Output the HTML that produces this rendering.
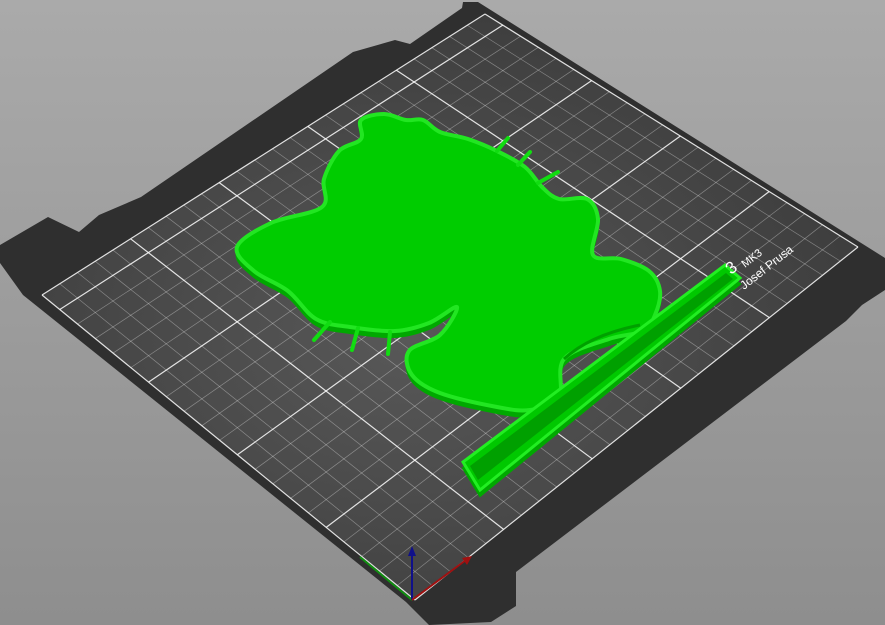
<!DOCTYPE html>
<html><head><meta charset="utf-8"><style>
html,body{margin:0;padding:0;width:885px;height:625px;overflow:hidden}
body{background:linear-gradient(#aaaaaa,#8e8e8e);}
svg{position:absolute;left:0;top:0}
</style></head><body>
<svg id="s" width="885" height="625" viewBox="0 0 885 625" xmlns="http://www.w3.org/2000/svg">
<defs>
<radialGradient id="g" cx="0.45" cy="0.55" r="0.6">
<stop offset="0" stop-color="#585858"/><stop offset="1" stop-color="#3c3c3c"/>
</radialGradient>
</defs>
<polygon fill="#2f2f2f" points="463,2 478,2 885,258 885,290 862,305 846,321 516,572 516,606 491,622 429,625 406,602 23,295 0,263 0,245 48,217 79,232 99,215 141,197 353,52 395,40 410,44 462,8"/>
<polygon fill="url(#g)" points="485,14 858,247 415,600 42,295"/>
<g id="grid"></g>
<g id="obj">
<g transform="translate(0,6)" fill="#00a800" stroke="#00a800" stroke-width="2">
<path id="cat" d=""/>
<polygon points="463,462 725,265 740,278 480,490"/>
</g>
<use href="#cat" fill="#00cc00" stroke="#22e622" stroke-width="4" stroke-linejoin="round"/>
<polygon points="463,462 725,265 740,278 480,490" fill="#00c800" stroke="#22ee22" stroke-width="3"/>
<polygon points="470,466 726,273 733,279 478,480" fill="#00a000"/>
<path d="M564,359 Q590,335 640,325" fill="none" stroke="#00a000" stroke-width="3"/>
<g stroke="#11dd11" stroke-width="4" stroke-linecap="round">
<line x1="497" y1="151" x2="508" y2="138"/><line x1="518" y1="165" x2="530" y2="152"/><line x1="538" y1="183" x2="558" y2="172"/>
<line x1="330" y1="322" x2="314" y2="340"/><line x1="358" y1="328" x2="352" y2="350"/><line x1="390" y1="332" x2="388" y2="354"/>
</g>
</g>
<g fill="#fff" font-family="Liberation Sans, sans-serif">
<text transform="translate(731,275) rotate(-38)" font-size="17">3</text>
<text transform="translate(745,268) rotate(-38)" font-size="11">MK3</text>
<text transform="translate(744,290) rotate(-38)" font-size="12">Josef Prusa</text>
</g>
<g stroke-width="2" fill="none">
<line x1="412" y1="600" x2="360" y2="557" stroke="#109010"/>
<line x1="412" y1="600" x2="412" y2="553" stroke="#10108a"/>
<polygon points="412,546 408,556 416,556" fill="#10108a" stroke="none"/>
<line x1="412" y1="600" x2="466" y2="560" stroke="#a01010"/>
<polygon points="472,556 462,558 467,565" fill="#a01010" stroke="none"/>
</g>
</svg>
<script>
var P00=[415,600],P10=[858,247],P01=[42,295],P11=[485,14];
function pt(u,v){return[(1-u)*(1-v)*P00[0]+u*(1-v)*P10[0]+(1-u)*v*P01[0]+u*v*P11[0],(1-u)*(1-v)*P00[1]+u*(1-v)*P10[1]+(1-u)*v*P01[1]+u*v*P11[1]];}
var g=document.getElementById('grid'),h='';
function ln(a,b,w,o){h+='<line x1="'+a[0]+'" y1="'+a[1]+'" x2="'+b[0]+'" y2="'+b[1]+'" stroke="#fff" stroke-opacity="'+o+'" stroke-width="'+w+'"/>';}
for(var i=0;i<=25;i++){var u=i/25,m=(i%5==0);ln(pt(u,0),pt(u,1),m?1.2:0.7,m?0.85:0.35);}
for(var j=0;j<=21;j++){var v=j/21,m=(j%5==0)||j==21;ln(pt(0,v),pt(1,v),m?1.2:0.7,m?0.85:0.35);}
g.innerHTML=h;
var p=[[237,247],[271,223],[322,207],[324,179],[339,151],[361,139],[361,120],[384,114],[406,120],[423,120],[440,132],[468,139],[497,151],[525,167],[542,187],[559,199],[587,199],[598,219],[593,255],[621,259],[649,271],[660,291],[655,315],[643,331],[609,339],[564,359],[559,399],[530,410],[497,407],[440,393],[412,375],[409,351],[440,335],[457,307],[429,323],[395,331],[350,327],[316,319],[288,291],[254,271]];
var n=p.length,d='M'+p[0][0]+','+p[0][1];
for(var k=0;k<n;k++){var a=p[(k-1+n)%n],b=p[k],c=p[(k+1)%n],e=p[(k+2)%n];
d+=' C'+(b[0]+(c[0]-a[0])/6)+','+(b[1]+(c[1]-a[1])/6)+' '+(c[0]-(e[0]-b[0])/6)+','+(c[1]-(e[1]-b[1])/6)+' '+c[0]+','+c[1];}
var cats=document.querySelectorAll('#cat');document.getElementById('cat').setAttribute('d',d+'Z');
</script>
</body></html>
